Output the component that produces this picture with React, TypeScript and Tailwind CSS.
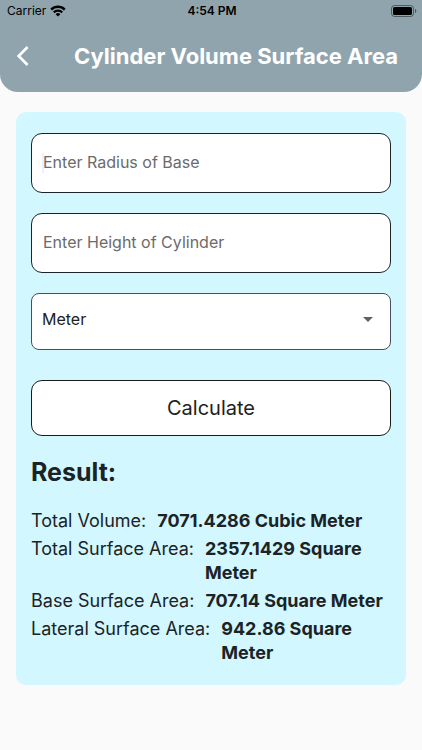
import { useState } from 'react';
import type { FormEvent } from 'react';

interface Dimensions {
  radius: number;
  height: number;
  unit: string;
}

interface NumberFieldProps {
  id: string;
  label: string;
  value: string;
  onChange: (value: string) => void;
  active?: boolean;
}

interface ResultRowProps {
  label: string;
  value: string;
}

const UNITS = ['Meter', 'Centimeter', 'Millimeter', 'Inch', 'Foot'];
const PI = 22 / 7;

function WifiIcon() {
  return (
    <svg className="w-4 h-3" viewBox="0 0 16 12" fill="none" stroke="black" aria-hidden="true">
      <path d="M1.2 4.6a9.7 9.7 0 0 1 13.6 0" strokeWidth="2.5" />
      <path d="M3.8 7.4a6 6 0 0 1 8.4 0" strokeWidth="2.3" />
      <path d="M8 11.6 5.6 9.2a3.4 3.4 0 0 1 4.8 0z" fill="black" stroke="none" />
    </svg>
  );
}

function BatteryIcon() {
  return (
    <svg className="w-[26px] h-3" viewBox="0 0 26 12" aria-hidden="true">
      <rect x="0.5" y="0.5" width="22" height="11" rx="3" fill="none" stroke="black" strokeOpacity="0.45" />
      <rect x="2" y="2" width="19" height="8" rx="1.6" fill="black" />
      <path d="M24 4v4c.8-.3 1.3-1.1 1.3-2S24.800 4.300 24 4z" fill="black" fillOpacity="0.5" />
    </svg>
  );
}

function StatusBar() {
  return (
    <div className="grid grid-cols-3 items-center h-[22px] pl-[7px] pr-[5px] text-xs text-black">
      <div className="flex items-center gap-1">
        <span>Carrier</span>
        <WifiIcon />
      </div>
      <span className="text-center font-semibold">4:54 PM</span>
      <div className="flex justify-end">
        <BatteryIcon />
      </div>
    </div>
  );
}

function NumberField({ id, label, value, onChange, active }: NumberFieldProps) {
  return (
    <div className="relative">
      <input
        id={id}
        type="text"
        inputMode="decimal"
        aria-label={label}
        placeholder={label}
        value={value}
        onChange={(e) => onChange(e.target.value)}
        className="block w-full h-[60px] px-[11px] pb-0.5 bg-white border border-[#1c2427] rounded-[11px] text-base text-[#212121] placeholder:text-[#6b6b6b] outline-none"
      />
      {/* idle cursor */}
      {active && !value && <span className="absolute left-[11px] top-5 w-0.5 h-5 bg-blue-500/10" />}
    </div>
  );
}

function ResultRow({ label, value }: ResultRowProps) {
  return (
    <div className="flex gap-[11px]">
      <dt className="shrink-0">{label}</dt>
      <dd className="flex-1 font-bold">{value}</dd>
    </div>
  );
}

export default function App() {
  const [radius, setRadius] = useState('');
  const [height, setHeight] = useState('');
  const [unit, setUnit] = useState('Meter');
  const [result, setResult] = useState<Dimensions>({ radius: 15, height: 10, unit: 'Meter' });

  const calculate = (e: FormEvent) => {
    e.preventDefault();
    const r = parseFloat(radius);
    const h = parseFloat(height);
    if (isNaN(r) || isNaN(h)) return;
    setResult({ radius: r, height: h, unit });
  };

  const base = PI * result.radius * result.radius;
  const lateral = 2 * PI * result.radius * result.height;
  const volume = base * result.height;
  const total = 2 * base + lateral;

  return (
    <div className="min-h-screen bg-[#fafafa] font-[Inter,sans-serif] text-[#1b2326]">
      <header className="bg-[#90a4ae] rounded-b-[18px]">
        <StatusBar />
        <div className="flex items-center justify-between h-[70px] pl-4 pr-6 pb-0.5 text-white">
          <button type="button" aria-label="Back" className="shrink-0">
            <svg className="w-[14px] h-5" viewBox="0 0 14 20" fill="none" stroke="currentColor" strokeWidth="2.6">
              <path d="M11.600 1 2.600 10l9 9" />
            </svg>
          </button>
          <h1 className="text-[22px] leading-7 font-bold whitespace-nowrap">Cylinder Volume Surface Area</h1>
        </div>
      </header>

      <main className="mx-4 mt-5 px-[15px] pt-[21px] pb-5 bg-[#d2f7ff] rounded-[10px]">
        <form onSubmit={calculate} className="flex flex-col gap-5">
          <NumberField id="radius" label="Enter Radius of Base" value={radius} onChange={setRadius} active />
          <NumberField id="height" label="Enter Height of Cylinder" value={height} onChange={setHeight} />

          <div className="relative">
            <select
              id="unit"
              aria-label="Unit"
              value={unit}
              onChange={(e) => setUnit(e.target.value)}
              className="block w-full h-[57px] pl-[10px] pr-10 pb-1.5 appearance-none bg-white border border-[#455058] rounded-lg text-base text-[#212121] outline-none"
            >
              {UNITS.map((u) => (
                <option key={u}>{u}</option>
              ))}
            </select>
            <svg className="absolute right-[18px] top-6 w-[10px] h-[5px] pointer-events-none" viewBox="0 0 10 5" fill="#616161">
              <path d="M0 0h10L5 5z" />
            </svg>
          </div>

          <button
            type="submit"
            className="mt-[10px] w-full h-14 bg-white border border-[#1b1b1b] rounded-[11px] text-xl text-[#212121]"
          >
            Calculate
          </button>
        </form>

        <h2 className="mt-5 text-[25px] leading-8 font-bold">Result:</h2>
        <dl className="mt-[21px] flex flex-col gap-1 text-lg leading-6">
          <ResultRow label="Total Volume:" value={`${volume.toFixed(4)} Cubic ${result.unit}`} />
          <ResultRow label="Total Surface Area:" value={`${total.toFixed(4)} Square ${result.unit}`} />
          <ResultRow label="Base Surface Area:" value={`${base.toFixed(2)} Square ${result.unit}`} />
          <ResultRow label="Lateral Surface Area:" value={`${lateral.toFixed(2)} Square ${result.unit}`} />
        </dl>
      </main>
    </div>
  );
}
